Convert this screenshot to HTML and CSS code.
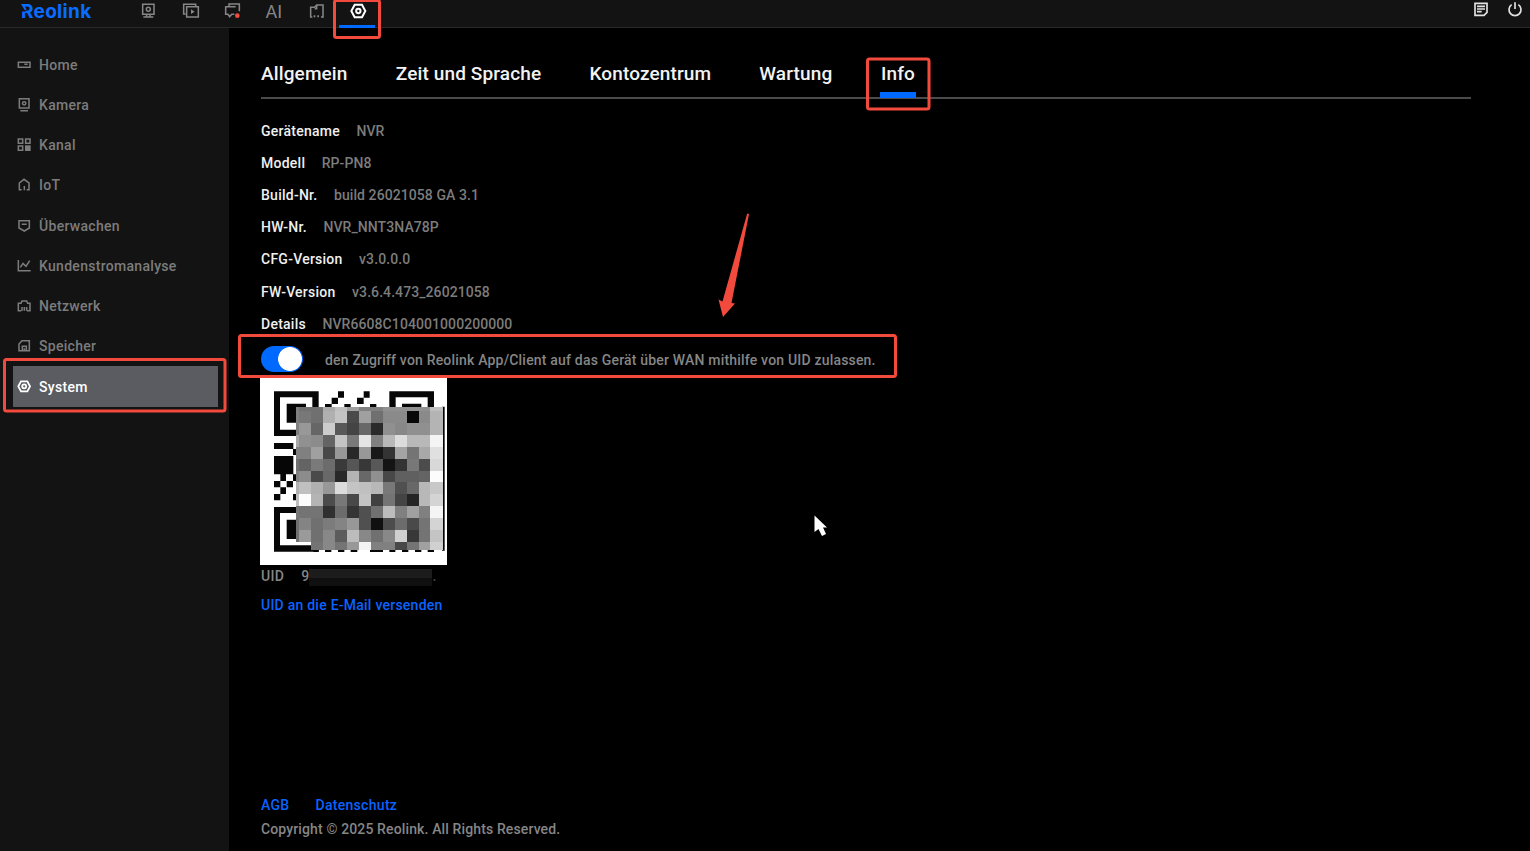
FILE: index.html
```html
<!DOCTYPE html>
<html lang="de">
<head>
<meta charset="utf-8">
<title>Reolink NVR</title>
<link rel="stylesheet" href="styles.css">
</head>
<body>
<header class="topbar">
  <div class="logo"><svg class="logo-flag" viewBox="0 0 8 16"><path class="cut" d="M0 0h4.800v7.500H0z"/><path class="flag" d="M0 0h8v2.500H4L5.500 5.500 4 6.500z"/></svg>Reolink</div>
  <nav class="topnav">
    <svg class="icon" viewBox="420 0 54 66"><path d="M428 13h34v30h-34zM430 51h30M440 43v7M450 43v7"/><circle cx="445" cy="28" r="6"/></svg>
    <svg class="icon" viewBox="543 0 54 66"><path d="M554 42h-6V13h36v5M557 20h35v31h-35z"/><path class="fill" d="M570 28v14l11-7z"/></svg>
    <svg class="icon" viewBox="669 0 54 66"><path d="M684 20v-8h31v22M674 20h30M674 19v24h7l5 7 6-7h8"/><circle class="alert" cx="709" cy="47" r="7"/></svg>
    <span class="ai">AI</span>
    <svg class="icon" viewBox="919 0 54 66"><path d="M932 51h-5V22h12l6-7h19v36h-6M945 15v11h-6"/><path class="fill" d="M936 46h5v6h-5zM947 46h5v6h-5z"/></svg>
    <svg class="icon active" viewBox="1046 0 54 66"><path d="M1060 14h22l10 19-10 19h-22l-10-19z"/><circle cx="1071" cy="33" r="6.500"/></svg>
  </nav>
  <div class="tools">
    <svg class="icon" viewBox="1432 0 54 66"><path d="M1441 10h36v27l-9 9h-27zM1447 19h24M1447 27h24M1447 35h14"/></svg>
    <svg class="icon" viewBox="1536 0 54 66"><path d="M1553 14a18 18 0 1 0 20 0M1563 7v20"/></svg>
  </div>
</header>
<div class="body">
  <aside class="sidebar">
    <a class="item"><svg viewBox="52 0 42 42"><path d="M56 13h35v15H56zM74 19h10"/></svg>Home</a>
    <a class="item"><svg viewBox="52 0 42 42"><path d="M59 2h29v28H59zM62 38h23"/><circle cx="73.500" cy="16" r="5"/></svg>Kamera</a>
    <a class="item"><svg viewBox="52 0 42 42"><path d="M56 3h13v13H56zM78 3h13v13H78zM56 24h13v13H56z"/><path class="fill" d="M76 22h17v17H76z"/></svg>Kanal</a>
    <a class="item"><svg viewBox="52 0 42 42"><path d="M66 35h-7V15l14-11 15 11v20h-7M74 37V24"/></svg>IoT</a>
    <a class="item"><svg viewBox="52 0 42 42"><path d="M58 5h31v22l-15 9-16-9zM66 16h15"/></svg>Überwachen</a>
    <a class="item"><svg viewBox="52 0 42 42"><path d="M56 3v32h37M62 25l8-12 9 9 11-17"/></svg>Kundenstromanalyse</a>
    <a class="item"><svg viewBox="52 0 42 42"><path d="M65 35h-9V13h8l3-7h14l3 7h7v22h-9M67 24v11M74 24v11M81 24v11"/></svg>Netzwerk</a>
    <a class="item"><svg viewBox="52 0 42 42"><path d="M58 35V15l9-10h22v30zM68 35V22h12v13M74 28v7"/></svg>Speicher</a>
    <a class="item selected"><svg viewBox="52 0 42 42"><path d="M64 4h19l8 15-8 15H64l-8-15z"/><circle cx="73.500" cy="19" r="6"/></svg>System</a>
  </aside>
  <main class="main">
    <nav class="tabs"><a>Allgemein</a><a>Zeit und Sprache</a><a>Kontozentrum</a><a>Wartung</a><a class="current">Info</a></nav>
    <dl class="info">
      <div><dt>Gerätename</dt><dd>NVR</dd></div>
      <div><dt>Modell</dt><dd>RP-PN8</dd></div>
      <div><dt>Build-Nr.</dt><dd>build 26021058 GA 3.1</dd></div>
      <div><dt>HW-Nr.</dt><dd>NVR_NNT3NA78P</dd></div>
      <div><dt>CFG-Version</dt><dd>v3.0.0.0</dd></div>
      <div><dt>FW-Version</dt><dd>v3.6.4.473_26021058</dd></div>
      <div><dt>Details</dt><dd>NVR6608C104001000200000</dd></div>
    </dl>
    <div class="access"><span class="switch"></span><span class="access-text">den Zugriff von Reolink App/Client auf das Gerät über WAN mithilfe von UID zulassen.</span></div>
    <svg class="qr" viewBox="30 24 561 561">
      <path fill="#fff" d="M30 24h561v561H30z"/>
      <path fill="#060606" fill-rule="evenodd" d="M72 64h134v134H72zM90 82v97h97V82zM418 64h134v134H418zM437 82v97h96V82zM72 411h134v134H72zM90 429v97h97v-97z"/>
      <path fill="#060606" d="M110 101h58v57h-58zM456 101h58v57h-58zM110 449h58v58h-58zM264 64h18v19h-18zM245 83h19v19h-19zM225 102h20v12h-20zM283 102h19v12h-19zM341 64h18v19h-18zM321 83h20v19h-20zM360 102h19v12h-19zM72 219h58v18H72zM129 237h10v18h-10zM72 258h58v55H72zM91 313h17v20H91zM129 313h10v20h-10zM72 333h19v19H72zM110 333h19v19h-19zM91 352h17v20H91zM72 372h19v19H72zM129 372h10v19h-10zM225 535h19v11h-19zM264 535h19v11h-19zM302 535h20v11h-20zM360 535h39v11h-39zM418 535h18v11h-18zM456 535h19v11h-19zM495 535h19v11h-19zM533 535h19v11h-19zM190 535h16v11h-16zM576 110h8v432h-8z"/>
      <g id="mosaic" shape-rendering="crispEdges"></g>
    </svg>
    <div class="uid"><span>UID</span><span class="uid-value">9</span><span class="redacted"></span><span class="uid-end">.</span></div>
    <a class="mail">UID an die E-Mail versenden</a>
    <footer class="footer">
      <div class="links"><a>AGB</a><a>Datenschutz</a></div>
      <p>Copyright © 2025 Reolink. All Rights Reserved.</p>
    </footer>
  </main>
</div>
<svg class="marks" viewBox="0 0 1530 851">
  <rect x="334.500" y="0.500" width="45" height="37" rx="2"/>
  <rect x="867.500" y="59" width="61.500" height="50" rx="2"/>
  <rect x="239.500" y="335.500" width="656" height="41" rx="2"/>
  <rect x="4.500" y="359.500" width="220.500" height="51.500" rx="2"/>
  <path class="arrow" d="M747.200 213.500L749 214 731.500 303l3.500.500L723 317l-4.500-17.500 4 2z"/>
  <path class="pointer" d="M814.500 515.500v16.500l4-3 3.500 7 4-2-3-6.500h4z"/>
</svg>
<script src="mosaic.js"></script>
</body>
</html>
```
FILE: styles.css
```css
* { box-sizing: border-box; }
body { margin: 0; width: 1530px; height: 851px; overflow: hidden; background: #000; color: #868686; font-family: Roboto, "Liberation Sans", sans-serif; font-size: 14px; font-weight: 500; letter-spacing: .3px; display: flex; flex-direction: column; }
.topbar { height: 28px; flex: none; background: #131313; border-bottom: 1px solid #292929; display: flex; align-items: flex-start; }
.logo { position: relative; width: 139.500px; height: 24px; padding-left: 21px; color: #0a6cff; font: 700 19px/23px Inter, sans-serif; letter-spacing: .3px; }
.logo-flag { position: absolute; left: 20.5px; top: 4px; width: 8px; height: 16px; }
.flag { fill: #0a6cff; }
.cut { fill: #131313; }
.topnav { display: flex; gap: 24px; height: 28px; padding-right: 10px; background: linear-gradient(#0069ff, #0069ff) 199.500px 25px / 36px 3px no-repeat; }
.icon { width: 18px; height: 22px; display: block; }
.icon, .item svg { fill: none; stroke: currentColor; stroke-width: 4.600; }
.icon .fill, .item .fill { fill: currentColor; stroke: none; }
.icon .alert { fill: #f34a3e; stroke: none; }
.ai { width: 18px; font-size: 18px; line-height: 23px; font-weight: 400; letter-spacing: 0; }
.icon.active { color: #fff; stroke-width: 6; }
.tools { margin-left: auto; padding-right: 6px; display: flex; gap: 16px; color: #e2e2e2; }
.tools .icon { stroke-width: 5; }
.body { flex: 1; display: flex; }
.sidebar { width: 229px; background: #131313; padding-top: 17px; }
.item { height: 40.150px; margin: 0 11.500px 0 12.500px; padding-left: 4.500px; display: flex; align-items: center; gap: 8px; color: #7c7c7c; }
.item svg { width: 14px; height: 14px; }
.item.selected { height: 41px; background: #5b5c61; color: #fff; }
.item.selected svg { stroke-width: 5.500; }
.main { flex: 1; padding: 26px 59px 0 32px; display: flex; flex-direction: column; align-items: flex-start; }
.tabs { width: 1210px; height: 45px; display: flex; gap: 48.200px; border-bottom: 2px solid #4b4b4c; color: #f2f2f2; font-size: 19px; line-height: 39px; letter-spacing: .130px; }
.tabs .current { height: 44px; border-bottom: 6px solid #0069ff; padding: 0 1px; margin-left: -.5px; }
.info { margin: 16px 0 0; }
.info div { height: 32.100px; display: flex; align-items: center; gap: 16.500px; }
dt { color: #f0f0f0; letter-spacing: .25px; }
dd { margin: 0; color: #7c7c7c; letter-spacing: .080px; }
.access { height: 38.300px; display: flex; align-items: center; gap: 22px; }
.switch { width: 42px; height: 26px; border-radius: 13px; background: radial-gradient(circle at 29px 13px, #fff 11.500px, #0069ff 12.300px); }
.access-text { padding-top: 3px; letter-spacing: .190px; }
.qr { width: 187px; height: 187px; margin-left: -1px; display: block; }
.uid { height: 22px; display: flex; align-items: center; }
.uid-value { margin-left: 17px; }
.redacted { width: 123px; height: 17px; margin-top: 4px; background: linear-gradient(#1c1c1c 50%, #101010 50%); }
.uid-end { color: #444; }
.mail, .links { color: #0b63ff; }
.mail { margin-top: 8px; line-height: 20px; letter-spacing: .240px; }
.footer { margin-top: auto; padding-bottom: 10px; }
.links { display: flex; gap: 26px; line-height: 24px; }
.footer p { margin: 0; line-height: 24px; letter-spacing: .130px; }
.marks { position: absolute; left: 0; top: 0; width: 1530px; height: 851px; pointer-events: none; }
.marks rect { fill: none; stroke: #f34a3e; stroke-width: 3; }
.arrow { fill: #f34a3e; }
.pointer { fill: #fff; }
```
FILE: mosaic.js
```js
// Grey levels of the pixelated area over the code, one hex pair per cell.
const rows = [
  "80 70 70 aa c0 a0 80 80 90 90 90 90 c0",
  "80 78 70 b0 c4 4a a0 70 8a 8a 08 8a b4",
  "80 98 66 cc 58 44 68 2a 90 88 90 90 b4",
  "a8 90 8c 64 c4 7a e4 80 b8 dc b8 b8 f4",
  "80 80 a0 48 98 28 98 18 34 a4 74 a8 e0",
  "70 64 7a 6c 3a 56 38 58 14 34 78 4c d8",
  "80 8c 4a 68 28 b4 68 90 48 60 60 64 fc",
  "b0 c0 b0 98 dc c4 c0 b8 78 50 68 b8 c8",
  "c0 fc b4 4c 78 48 c4 40 74 44 24 b8 d4",
  "78 74 74 30 6c 34 50 70 bc 80 a0 80 f4",
  "70 84 70 7c 84 98 50 10 4c 6c 4a 74 d4",
  "70 9a 70 88 5c bc 88 70 88 d0 38 74 c4",
  "00 98 74 88 74 98 f4 80 80 48 74 a0 d0"
];
const xs = [137, 148, 184, 220, 255, 291, 327, 363, 399, 435, 470, 506, 541, 578];
const ys = [110, 122, 158, 194, 231, 266, 302, 337, 373, 408, 444, 480, 516, 540];
const group = document.getElementById("mosaic");
rows.forEach((row, j) => row.split(" ").forEach((g, i) => {
  if (j === 12 && i < 2) return;
  const r = document.createElementNS("http://www.w3.org/2000/svg", "rect");
  r.setAttribute("x", xs[i]);
  r.setAttribute("y", ys[j]);
  r.setAttribute("width", xs[i + 1] - xs[i]);
  r.setAttribute("height", ys[j + 1] - ys[j]);
  r.setAttribute("fill", "#" + g + g + g);
  group.appendChild(r);
}));
```
